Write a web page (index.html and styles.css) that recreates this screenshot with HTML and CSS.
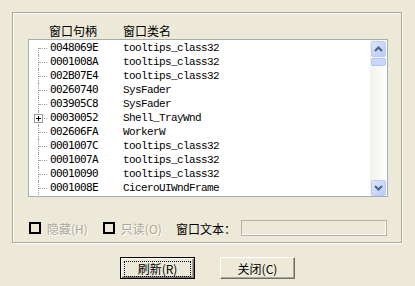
FILE: index.html
```html
<!DOCTYPE html>
<html lang="zh-CN">
<head>
  <meta charset="UTF-8" />
  <title>窗口列表</title>
  <link rel="stylesheet" href="styles.css">
</head>
<body>

  <div class="group">
    <div class="head">
      <span class="col-h">窗口句柄</span>
      <span class="col-c">窗口类名</span>
    </div>

    <div class="list">
      <div class="rows">
        <div class="row first"><span class="tree"></span><span class="h">0048069E</span><span class="c">tooltips_class32</span></div>
        <div class="row"><span class="tree"></span><span class="h">0001008A</span><span class="c">tooltips_class32</span></div>
        <div class="row"><span class="tree"></span><span class="h">002B07E4</span><span class="c">tooltips_class32</span></div>
        <div class="row"><span class="tree"></span><span class="h">00260740</span><span class="c">SysFader</span></div>
        <div class="row"><span class="tree"></span><span class="h">003905C8</span><span class="c">SysFader</span></div>
        <div class="row"><span class="tree"><i class="plus"></i></span><span class="h">00030052</span><span class="c">Shell_TrayWnd</span></div>
        <div class="row"><span class="tree"></span><span class="h">002606FA</span><span class="c">WorkerW</span></div>
        <div class="row"><span class="tree"></span><span class="h">0001007C</span><span class="c">tooltips_class32</span></div>
        <div class="row"><span class="tree"></span><span class="h">0001007A</span><span class="c">tooltips_class32</span></div>
        <div class="row"><span class="tree"></span><span class="h">00010090</span><span class="c">tooltips_class32</span></div>
        <div class="row"><span class="tree"></span><span class="h">0001008E</span><span class="c">CiceroUIWndFrame</span></div>
      </div>

      <div class="vscroll">
        <div class="sbtn">
          <svg width="9" height="6" viewBox="0 0 9 6"><path d="M1 5 L4.5 1.5 L8 5" fill="none" stroke="#4d6185" stroke-width="2"/></svg>
        </div>
        <div class="thumb"></div>
        <div class="track"></div>
        <div class="sbtn">
          <svg width="9" height="6" viewBox="0 0 9 6"><path d="M1 1 L4.5 4.5 L8 1" fill="none" stroke="#4d6185" stroke-width="2"/></svg>
        </div>
      </div>
    </div>

    <div class="opts">
      <label class="chk"><span class="box"></span><span class="dis">隐藏(H)</span></label>
      <label class="chk"><span class="box"></span><span class="dis">只读(O)</span></label>
      <span class="txt-label">窗口文本：</span>
      <span class="field"></span>
    </div>
  </div>

  <div class="buttons">
    <button class="btn default"><span class="focus">刷新(R)</span></button>
    <button class="btn">关闭(C)</button>
  </div>

</body>
</html>
```

FILE: styles.css
```css
body {
  margin: 0;
  background: #ece9d8;
  font-family: "Noto Sans CJK SC", "DejaVu Sans", sans-serif;
  font-size: 12px;
  color: #000;
  width: 415px;
  height: 286px;
  overflow: hidden;
}

.group {
  box-sizing: border-box;
  margin: 12px 0 0 12px;
  width: 390px;
  height: 231px;
  border: 1px solid #aca899;
  box-shadow: inset 1px 1px #fff, 1px 1px #fff;
  padding: 11px 0 0 15px;
}

.head {
  display: flex;
  height: 15px;
  line-height: 14px;
}

.col-h {
  width: 74px;
  padding-left: 21px;
}

/* list box */
.list {
  display: flex;
  width: 360px;
  height: 158px;
  box-sizing: border-box;
  border: 1px solid #a5acb2;
  background: #fff;
}

.rows {
  flex: 1;
  padding-top: 1px;
}

.row {
  display: flex;
  height: 14px;
  line-height: 14px;
  white-space: nowrap;
}

.tree {
  position: relative;
  width: 21px;
  flex: none;
}

.tree::before {
  content: "";
  position: absolute;
  left: 9px;
  top: 0;
  height: 14px;
  border-left: 1px dotted #a0a0a0;
}

.row.first .tree::before {
  top: 7px;
  height: 7px;
}

.tree::after {
  content: "";
  position: absolute;
  left: 10px;
  top: 7px;
  width: 8px;
  border-top: 1px dotted #a0a0a0;
}

.plus {
  position: absolute;
  left: 5px;
  top: 3px;
  width: 7px;
  height: 7px;
  border: 1px solid #919b9c;
  background: #fff;
  z-index: 1;
}

.plus::before,
.plus::after {
  content: "";
  position: absolute;
  background: #000;
}

.plus::before {
  left: 1px;
  top: 3px;
  width: 5px;
  height: 1px;
}

.plus::after {
  left: 3px;
  top: 1px;
  width: 1px;
  height: 5px;
}

.h {
  width: 73px;
  font-family: "DejaVu Sans Mono", monospace;
  font-size: 11px;
  letter-spacing: -0.62px;
}

.c {
  font-family: "Liberation Mono", monospace;
  font-size: 11px;
  letter-spacing: -0.6px;
}

/* scroll bar */
.vscroll {
  width: 17px;
  display: flex;
  flex-direction: column;
  background: linear-gradient(90deg, #f3f1ec, #fefefb);
  padding-top: 1px;
}

.sbtn {
  box-sizing: border-box;
  height: 16px;
  margin: 0 1px;
  border: 1px solid #b9cdf6;
  border-radius: 2px;
  background: linear-gradient(135deg, #dce6fd, #b8cbf6);
  display: flex;
  align-items: center;
  justify-content: center;
}

.thumb {
  height: 6px;
  margin: 1px 1px 0;
  border: 1px solid #b3c6f3;
  border-radius: 2px;
  background: #c8d7fa;
}

.track {
  flex: 1;
}

/* options row */
.opts {
  display: flex;
  align-items: center;
  height: 16px;
  margin-top: 23px;
}

.chk {
  display: flex;
  align-items: center;
  margin-right: 14px;
}

.box {
  width: 8px;
  height: 8px;
  border: 2px solid #000;
  margin: 0 6px 0 1px;
}

.dis {
  color: #aca899;
  text-shadow: 1px 1px #fff;
}

.txt-label {
  margin-right: 5px;
}

.field {
  box-sizing: border-box;
  width: 146px;
  height: 16px;
  border: 1px solid #b5b2a5;
  box-shadow: inset -1px -1px #fff;
}

/* buttons */
.buttons {
  display: flex;
  justify-content: center;
  gap: 25px;
  margin-top: 14px;
}

.btn {
  box-sizing: border-box;
  width: 75px;
  height: 22px;
  padding: 0;
  font-family: inherit;
  font-size: 12px;
  background: #ece9d8;
  border: 1px solid;
  border-color: #fff #716f64 #716f64 #fff;
  box-shadow: inset -1px -1px #aca899;
}

.btn.default {
  border: 1px solid #000;
  box-shadow: inset 1px 1px #fff, inset -1px -1px #716f64, inset -2px -2px #aca899;
}

.focus {
  display: block;
  margin: 3px;
  line-height: 12px;
  padding: 1px 0;
  border: 1px dotted #000;
}
```
